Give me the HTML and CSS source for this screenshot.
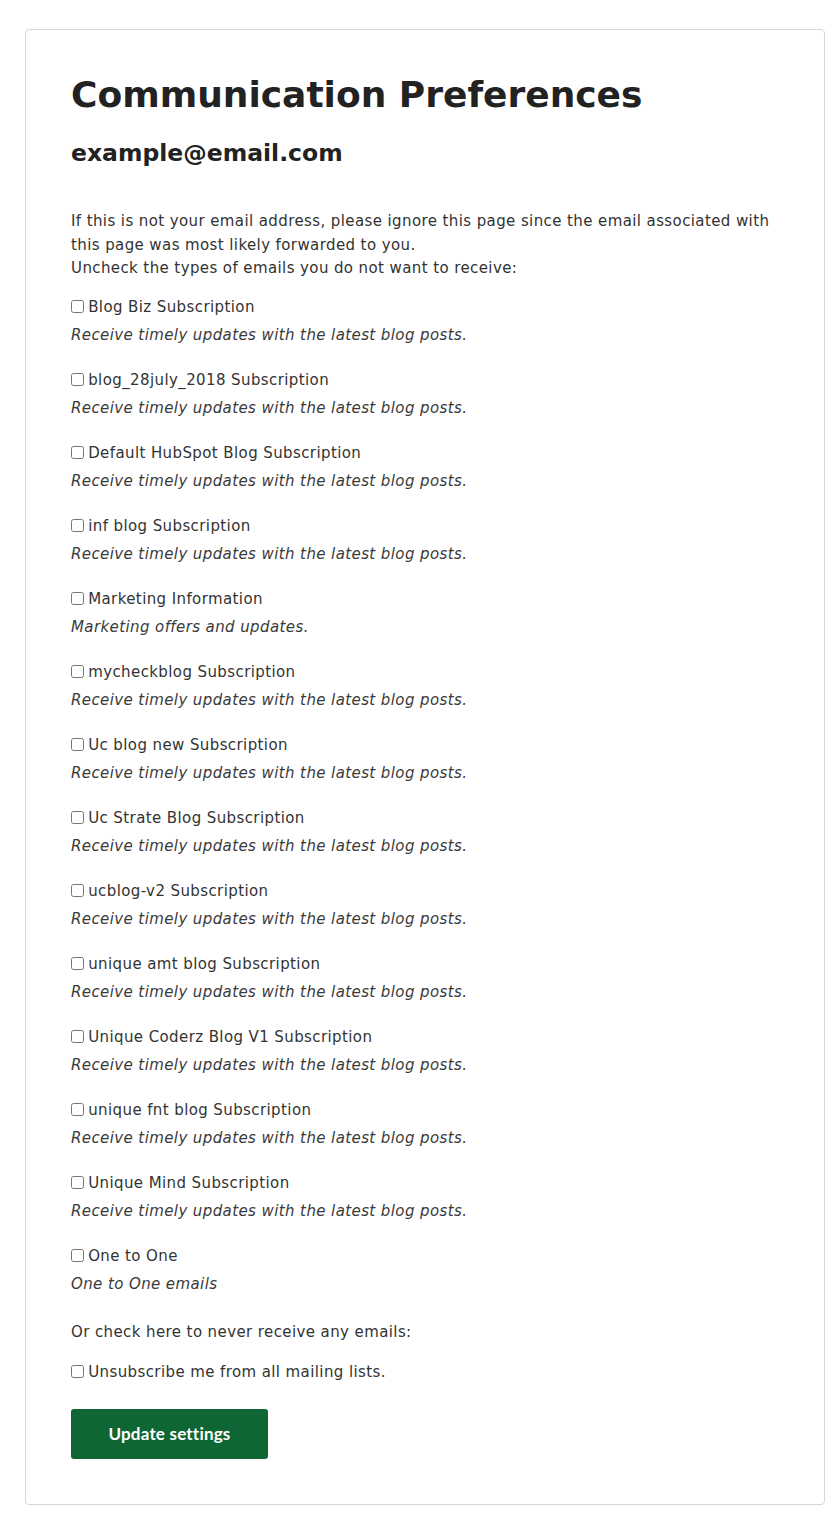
FILE: index.html
```html
<!doctype html>
<html lang="en">
<head>
<meta charset="utf-8" />
<title>Communication Preferences</title>
<link rel="stylesheet" href="styles.css">
</head>
<body>

<div class="page">
<form class="card">
	<h1>Communication Preferences</h1>
	<h2>example@email.com</h2>

	<p class="intro">If this is not your email address, please ignore this page since the email associated with this page was most likely forwarded to you.<br>Uncheck the types of emails you do not want to receive:</p>

	<div class="item">
		<label><input type="checkbox"> Blog Biz Subscription</label>
		<p class="desc">Receive timely updates with the latest blog posts.</p>
	</div>
	<div class="item">
		<label><input type="checkbox"> blog_28july_2018 Subscription</label>
		<p class="desc">Receive timely updates with the latest blog posts.</p>
	</div>
	<div class="item">
		<label><input type="checkbox"> Default HubSpot Blog Subscription</label>
		<p class="desc">Receive timely updates with the latest blog posts.</p>
	</div>
	<div class="item">
		<label><input type="checkbox"> inf blog Subscription</label>
		<p class="desc">Receive timely updates with the latest blog posts.</p>
	</div>
	<div class="item">
		<label><input type="checkbox"> Marketing Information</label>
		<p class="desc">Marketing offers and updates.</p>
	</div>
	<div class="item">
		<label><input type="checkbox"> mycheckblog Subscription</label>
		<p class="desc">Receive timely updates with the latest blog posts.</p>
	</div>
	<div class="item">
		<label><input type="checkbox"> Uc blog new Subscription</label>
		<p class="desc">Receive timely updates with the latest blog posts.</p>
	</div>
	<div class="item">
		<label><input type="checkbox"> Uc Strate Blog Subscription</label>
		<p class="desc">Receive timely updates with the latest blog posts.</p>
	</div>
	<div class="item">
		<label><input type="checkbox"> ucblog-v2 Subscription</label>
		<p class="desc">Receive timely updates with the latest blog posts.</p>
	</div>
	<div class="item">
		<label><input type="checkbox"> unique amt blog Subscription</label>
		<p class="desc">Receive timely updates with the latest blog posts.</p>
	</div>
	<div class="item">
		<label><input type="checkbox"> Unique Coderz Blog V1 Subscription</label>
		<p class="desc">Receive timely updates with the latest blog posts.</p>
	</div>
	<div class="item">
		<label><input type="checkbox"> unique fnt blog Subscription</label>
		<p class="desc">Receive timely updates with the latest blog posts.</p>
	</div>
	<div class="item">
		<label><input type="checkbox"> Unique Mind Subscription</label>
		<p class="desc">Receive timely updates with the latest blog posts.</p>
	</div>
	<div class="item">
		<label><input type="checkbox"> One to One</label>
		<p class="desc">One to One emails</p>
	</div>

	<p class="never">Or check here to never receive any emails:</p>
	<label class="unsub"><input type="checkbox"> Unsubscribe me from all mailing lists.</label>

	<button type="submit" class="submit">Update settings</button>
</form>
</div>

</body>
</html>
```

FILE: styles.css
```css
:root {
	--text: #333;
	--heading: #222;
	--green: #0e6634;
	font-family: "DejaVu Sans", sans-serif;
}

body, html {
	margin: 0;
	padding: 0;
	background: #fff;
}

.page {
	padding: 29px 14px 12px 25px;
}

.card {
	border: 1px solid #d6d6d6;
	border-radius: 4px;
	padding: 42px 45px 45px 45px;
	color: var(--text);
	font-size: 15px;
	line-height: 24px;
	letter-spacing: 0.4px;
}

h1 {
	margin: 0;
	font-size: 36px;
	line-height: 46px;
	font-weight: bold;
	letter-spacing: 0;
	color: var(--heading);
}

h2 {
	margin: 21px 0 0;
	font-size: 23.5px;
	line-height: 29px;
	font-weight: bold;
	letter-spacing: 0;
	color: var(--heading);
}

.intro {
	margin: 42px 0 14px;
	line-height: 23.5px;
}

.item {
	margin-bottom: 21px;
}

label {
	display: block;
}

input[type="checkbox"] {
	width: 13px;
	height: 13px;
	margin: 0 -1px 0 0;
	vertical-align: -1px;
}

.desc {
	margin: 4px 0 0;
	font-style: italic;
	color: #3a3a3a;
}

.never {
	margin: 24px 0 16px;
}

.submit {
	display: block;
	margin-top: 25px;
	width: 197px;
	height: 50px;
	border: 0;
	border-radius: 3px;
	background: var(--green);
	color: #fff;
	font-family: Lato, sans-serif;
	font-size: 17px;
	font-weight: bold;
	letter-spacing: 0.2px;
}
```
